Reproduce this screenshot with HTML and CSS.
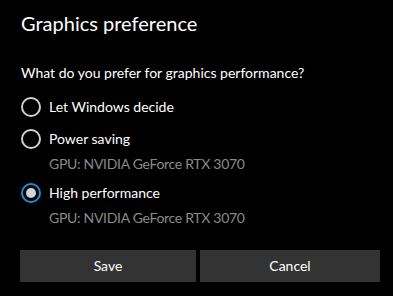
FILE: index.html
```html
<!DOCTYPE html>
<html lang="en">
<head>
<meta charset="utf-8">
<title>Graphics preference</title>
<link rel="stylesheet" href="styles.css">
</head>
<body>
<div class="dialog">
  <h1 class="title">Graphics preference</h1>
  <p class="question">What do you prefer for graphics performance?</p>
  <div class="options">
    <div class="option">
      <div class="row"><span class="radio"></span><span class="label">Let Windows decide</span></div>
    </div>
    <div class="option">
      <div class="row"><span class="radio"></span><span class="label">Power saving</span></div>
      <div class="sub">GPU: NVIDIA GeForce RTX 3070</div>
    </div>
    <div class="option">
      <div class="row"><span class="radio checked"></span><span class="label">High performance</span></div>
      <div class="sub">GPU: NVIDIA GeForce RTX 3070</div>
    </div>
  </div>
  <div class="buttons">
    <button class="btn btn-save">Save</button>
    <button class="btn btn-cancel">Cancel</button>
  </div>
</div>
</body>
</html>
```
FILE: styles.css
```css
html, body {
  margin: 0;
  padding: 0;
  background: #000;
}
body {
  width: 393px;
  height: 296px;
  overflow: hidden;
  font-family: "Lato", "Noto Sans", sans-serif;
  color: #fff;
}
.dialog {
  padding: 9px 13px 0 20px;
  display: flex;
  flex-direction: column;
}
.title {
  margin: 0;
  font-size: 20px;
  line-height: 28px;
  font-weight: 400;
  padding-left: 1px;
}
.question {
  margin: 26px 0 8px 1px;
  font-size: 14px;
  line-height: 20px;
}
.options {
  display: flex;
  flex-direction: column;
}
.option {
  display: flex;
  flex-direction: column;
}
.row {
  height: 32px;
  display: flex;
  align-items: center;
  gap: 8px;
  padding-left: 1px;
}
.radio {
  width: 20px;
  height: 20px;
  box-sizing: border-box;
  border: 2px solid #cfcfcf;
  border-radius: 50%;
  flex: none;
  display: flex;
  align-items: center;
  justify-content: center;
}
.radio.checked {
  border-color: #1b8be0;
}
.radio.checked::after {
  content: "";
  width: 10px;
  height: 10px;
  border-radius: 50%;
  background: #d4d4d4;
}
.label {
  font-size: 14px;
  line-height: 20px;
}
.sub {
  margin: -1px 0 3px 29px;
  font-size: 14px;
  line-height: 20px;
  color: #8a8a8a;
  letter-spacing: -0.3px;
}
.buttons {
  margin-top: 19px;
  display: flex;
  gap: 4px;
  width: 360px;
}
.btn {
  height: 32px;
  border: none;
  background: #333;
  color: #fff;
  font-family: inherit;
  font-size: 14px;
  line-height: 20px;
  padding: 0;
}
.btn-save { width: 176px; }
.btn-cancel { width: 180px; }
```
